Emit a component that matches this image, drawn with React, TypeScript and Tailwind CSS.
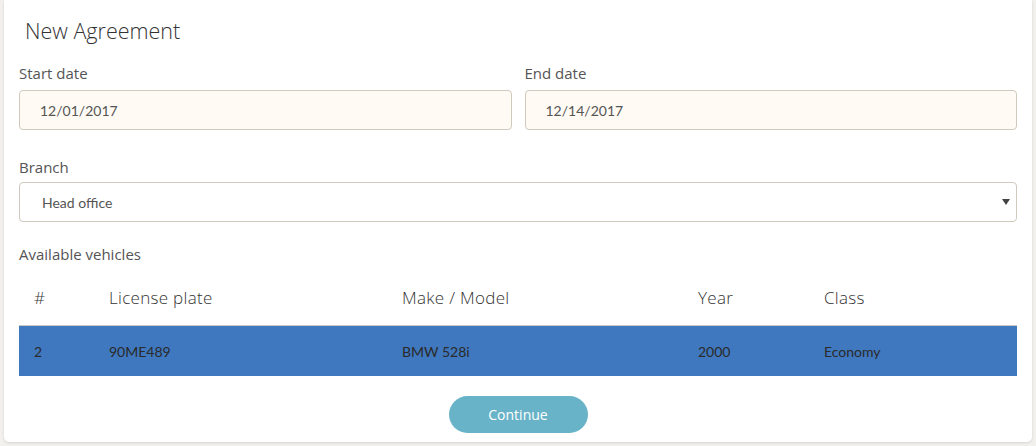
const vehicles = [{ id: 2, plate: '90ME489', model: 'BMW 528i', year: 2000, cls: 'Economy' }];

function Field({ label, value }: { label: string; value: string }) {
  return (
    <div className="flex-1">
      <div className="font-['Open_Sans',sans-serif] text-[15px] text-[#555] leading-[20px] mb-[7px]">{label}</div>
      <div className="h-[40px] rounded-[4px] border border-[#cfc9be] bg-[#fffbf4] flex items-center pl-[20px] text-[14px] text-[#555]">
        {value}
      </div>
    </div>
  );
}

export default function App() {
  return (
    <div className="w-[1036px] h-[446px] bg-[#f3f1ed] px-[4px] font-['Lato',sans-serif] overflow-hidden">
      <div className="bg-white h-[442px] rounded-b-[5px] shadow-[0_1px_3px_rgba(0,0,0,0.12)] px-[15px]">
        <h1 className="pt-[18px] pl-[6px] font-['Open_Sans',sans-serif] text-[21.5px] leading-[26px] text-[#333] font-light">New Agreement</h1>

        <div className="flex gap-[13px] mt-[19px]">
          <Field label="Start date" value="12/01/2017" />
          <Field label="End date" value="12/14/2017" />
        </div>

        <div className="mt-[27px]">
          <div className="font-['Open_Sans',sans-serif] text-[15px] text-[#555] leading-[20px] mb-[5px]">Branch</div>
          <div className="relative h-[40px] rounded-[4px] border border-[#cfc9be] bg-white flex items-center pl-[22px] text-[14px] text-[#555]">
            Head office
            {/* select caret */}
            <svg className="absolute right-[6px] top-[16px]" width="8" height="6" viewBox="0 0 8 6">
              <path d="M0 0h8L4 6z" fill="#444" />
            </svg>
          </div>
        </div>

        <div className="mt-[22px] font-['Open_Sans',sans-serif] text-[15px] text-[#555] leading-[20px]">Available vehicles</div>

        <div className="mt-[14px]">
          <div className="grid grid-cols-[75px_293px_296px_126px_1fr] h-[48px] pt-[10px] leading-[20px] border-b border-[#c8c8c8] font-['Open_Sans',sans-serif] text-[17px] tracking-[0.3px] text-[#333] font-light">
            <div className="pl-[15px]">#</div>
            <div className="pl-[15px]">License plate</div>
            <div className="pl-[15px]">Make / Model</div>
            <div className="pl-[15px]">Year</div>
            <div className="pl-[15px]">Class</div>
          </div>
          {vehicles.map((v) => (
            <div
              key={v.id}
              className="grid grid-cols-[75px_293px_296px_126px_1fr] h-[50px] items-center bg-[#3f78be] text-[14px] text-[#2a2a2a]"
            >
              <div className="pl-[15px]">{v.id}</div>
              <div className="pl-[15px]">{v.plate}</div>
              <div className="pl-[15px]">{v.model}</div>
              <div className="pl-[15px]">{v.year}</div>
              <div className="pl-[15px]">{v.cls}</div>
            </div>
          ))}
        </div>

        <div className="flex justify-center mt-[20px]">
          <button className="w-[139px] h-[37px] rounded-full bg-[#69b3c8] text-white text-[14px] font-['Open_Sans',sans-serif]">
            Continue
          </button>
        </div>
      </div>
    </div>
  );
}
